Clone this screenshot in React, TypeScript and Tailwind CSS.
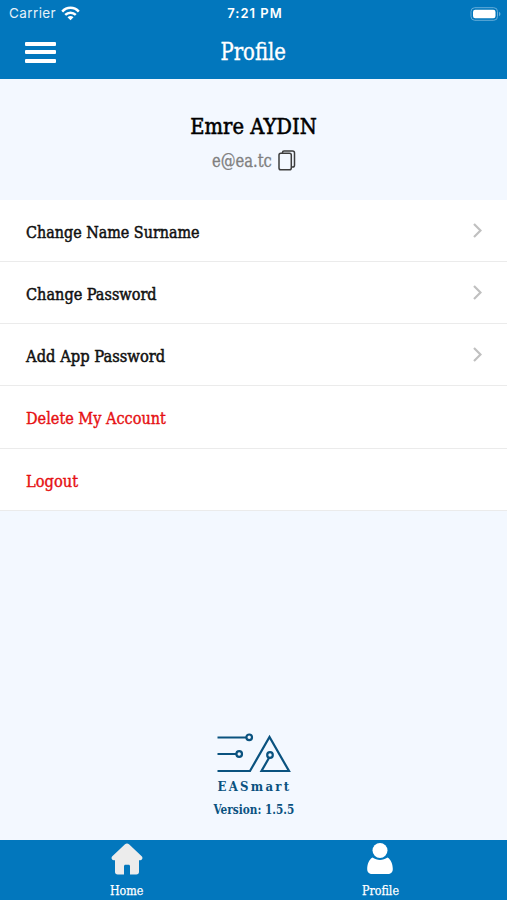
const menuItems = [
  { label: "Change Name Surname", scale: "scale-x-[0.91]" },
  { label: "Change Password", scale: "scale-x-[0.92]" },
  { label: "Add App Password", scale: "scale-x-[0.935]" },
  { label: "Delete My Account", scale: "scale-x-[0.92]", danger: true },
  { label: "Logout", scale: "scale-x-[0.93]", danger: true },
];

function StatusBar() {
  return (
    <div className="flex h-[27px] items-center font-['Inter',sans-serif] text-[13.5px] leading-none">
      <div className="flex flex-1 items-center gap-[5px] pl-[9px]">
        <span className="pt-px tracking-[0.4px] opacity-90">Carrier</span>
        <svg width="19" height="15" viewBox="0 0 19 15" fill="none" stroke="white" strokeWidth="2.5">
          <path d="M1.2 5.6C5.8 .6 13.2 .6 17.8 5.6" />
          <path d="M4.2 8.9c3-2.9 7.6-2.9 10.6 0" />
          <path d="M6.5 11.2c1.8-1.6 4.2-1.6 6 0L9.5 14.2z" fill="white" stroke="none" />
        </svg>
      </div>
      <span className="text-[13px] font-semibold tracking-[1px]">7:21 PM</span>
      <div className="flex flex-1 justify-end pr-[6px]">
        <svg width="31" height="14" viewBox="0 0 31 14">
          <rect x="1" y=".7" width="26.5" height="12.6" rx="3.8" fill="none" stroke="#66add9" strokeWidth="1" />
          <rect x="3" y="2.7" width="22.5" height="8.6" rx="2.2" fill="white" />
          <path d="M29 4.8c2 .8 2 3.6 0 4.4z" fill="#66add9" />
        </svg>
      </div>
    </div>
  );
}

function Header() {
  return (
    <header className="h-[79px] bg-[#0277bd] text-white">
      <StatusBar />
      <div className="grid h-[50px] grid-cols-[1fr_auto_1fr] items-center">
        <div className="ml-[25px] flex w-[31px] flex-col gap-[4.5px]">
          <i className="h-[4px] rounded-[1px] bg-white" />
          <i className="h-[4px] rounded-[1px] bg-white" />
          <i className="h-[4px] rounded-[1px] bg-white" />
        </div>
        <h1 className="scale-x-[0.93] pt-px text-[23.5px] leading-none [-webkit-text-stroke:0.35px_white]">Profile</h1>
      </div>
    </header>
  );
}

function Logo() {
  return (
    <svg width="76" height="40" viewBox="0 0 76 40" fill="none" stroke="#0a527f" strokeWidth="2.2">
      <path d="M1.500 4.500h29M1.500 21h19M1.500 38h32.500L53.500 4l19.500 34H45.500l8-14" />
      <circle cx="33.2" cy="4.3" r="2.8" />
      <circle cx="23.2" cy="21" r="2.8" />
      <circle cx="54" cy="22" r="2.8" fill="#f3f8ff" />
    </svg>
  );
}

export default function App() {
  return (
    <div className="flex h-[900px] w-[507px] flex-col overflow-hidden bg-[#f3f8ff] font-['DejaVu_Serif_Condensed','DejaVu_Serif',serif]">
      <Header />

      {/* User */}
      <section className="flex h-[120.5px] flex-col items-center pt-[35px]">
        <h2 className="scale-x-[0.965] text-[22.5px] leading-6 text-black [-webkit-text-stroke:0.55px_black]">
          Emre AYDIN
        </h2>
        <div className="mt-[11px] flex h-[23px] items-center gap-[6px] text-[#808080]">
          <span className="w-[60px] origin-left scale-x-[0.91] text-[18px] leading-5 whitespace-nowrap [-webkit-text-stroke:0.3px_#808080]">
            e@ea.tc
          </span>
          <svg width="18" height="21" viewBox="0 0 18 21" fill="none" stroke="#3d3d3d" strokeWidth="1.5">
            <rect x="1" y="3.2" width="12.3" height="16.5" rx="1.8" />
            <path d="M4.5 3V2.5C4.5 1.5 5 1 6 1h8.5c1.2 0 2 .8 2 2v12.2c0 1.1-.7 1.8-1.8 1.8h-1" />
          </svg>
        </div>
      </section>

      {/* Menu */}
      <ul className="bg-white">
        {menuItems.map((item) => (
          <li
            key={item.label}
            className="flex h-[62.25px] items-center justify-between border-b border-[#ebebeb] pr-[25.5px] pl-[25.5px]"
          >
            <span
              className={`${item.scale} origin-left pt-[3px] text-[17.5px] leading-6 whitespace-nowrap ${
                item.danger
                  ? "text-[#e60f12] [-webkit-text-stroke:0.4px_#e60f12]"
                  : "text-[#111] [-webkit-text-stroke:0.5px_#111]"
              }`}
            >
              {item.label}
            </span>
            {!item.danger && (
              <svg width="9" height="15" viewBox="0 0 9 15" fill="none" stroke="#c0c0c0" strokeWidth="2.2">
                <path d="m1 1 6.5 6.5L1 14" />
              </svg>
            )}
          </li>
        ))}
      </ul>

      {/* Brand */}
      <div className="flex flex-1 flex-col items-center justify-end pb-[22px] font-bold text-[#0a527f]">
        <Logo />
        <span className="mt-[6px] mr-[-2px] text-[13px] leading-4 tracking-[2.3px]">EASmart</span>
        <span className="mt-[7px] scale-x-[0.9] text-[13px] leading-4">Version: 1.5.5</span>
      </div>

      {/* Tabs */}
      <nav className="grid h-[60px] grid-cols-2 bg-[#0277bd] text-white">
        <div className="flex flex-col items-center pt-[3px]">
          <svg width="32" height="32" viewBox="0 0 32 32" fill="#ececec">
            <path d="M14 1.300c1.200-1.100 2.800-1.100 4 0l12.700 12c1.500 1.500.6 4-1.500 4H28v11.500c0 1.800-1 2.700-2.700 2.700H19V23.500c0-1.200-.5-1.700-1.500-1.700h-3c-1 0-1.500.5-1.500 1.700v8H6.700C5 31.500 4 30.600 4 28.800V17.300H2.800c-2.100 0-3-2.500-1.500-4z" />
          </svg>
          <span className="mt-[8px] scale-x-[0.95] text-[13px] leading-4 [-webkit-text-stroke:0.25px_white]">Home</span>
        </div>
        <div className="flex flex-col items-center pt-[3px]">
          <svg width="28" height="32" viewBox="0 0 28 32" fill="white">
            <circle cx="14" cy="7.5" r="7.5" />
            <path d="M6.500 14.500c4.500 3.200 10.500 3.200 15 0 3.500 2 5.300 6.500 5.300 11.500 0 3.500-2 5-5 5H6.200c-3 0-5-1.500-5-5 0-5 1.800-9.500 5.300-11.500z" />
          </svg>
          <span className="mt-[8px] scale-x-[0.95] text-[13px] leading-4 [-webkit-text-stroke:0.25px_white]">Profile</span>
        </div>
      </nav>
    </div>
  );
}
